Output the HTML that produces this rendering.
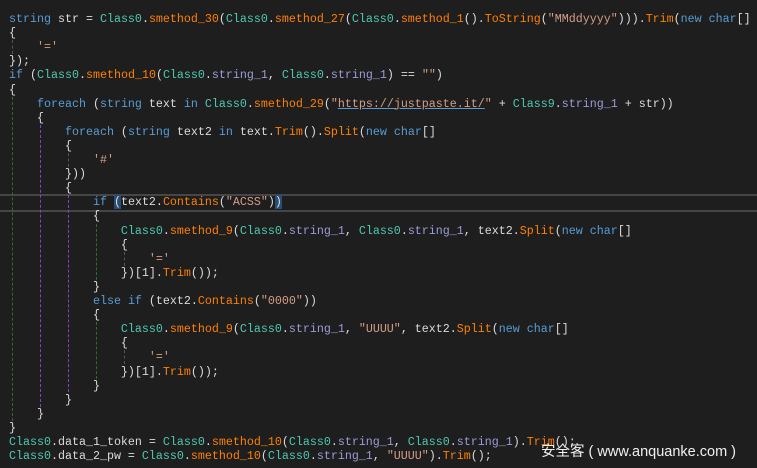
<!DOCTYPE html>
<html><head><meta charset="utf-8"><style>
html,body{margin:0;padding:0;background:#1e1e1e;width:757px;height:468px;overflow:hidden}
#c{position:absolute;left:0;top:0;width:757px;height:468px}
.l{position:absolute;left:9px;height:14.1px;line-height:14.1px;white-space:pre;font-family:"Liberation Mono",monospace;font-size:11.67px;color:#dcdcdc}
.k{color:#569cd6}.t{color:#4ec9b0}.m{color:#ff8000}.f{color:#9b9bd8}.s{color:#d69d85}.u{color:#d69d85;text-decoration:underline;text-decoration-color:#569cd6}
.g{position:absolute;width:0;border-left:1px dashed}
.hl{position:absolute;left:0;width:757px;top:193.5px;height:14px;border-top:2px solid #464646;border-bottom:2px solid #464646}
.bb{background:#264f78}
#wm{position:absolute;left:541px;top:440px;font-family:"Liberation Sans","Noto Sans CJK SC",sans-serif;font-size:14.5px;color:#f0f0f0;white-space:pre}
</style></head><body><div id="c">
<div class="hl"></div>
<div class="g" style="left:12px;top:40.2px;height:14.1px;border-color:#555"></div>
<div class="g" style="left:12px;top:96.6px;height:324px;border-color:#2e6b30"></div>
<div class="g" style="left:40px;top:124.8px;height:282px;border-color:#8a3fc9"></div>
<div class="g" style="left:68px;top:195.3px;height:197px;border-color:#8a3fc9"></div>
<div class="g" style="left:68px;top:153px;height:14.1px;border-color:#555"></div>
<div class="g" style="left:96px;top:223.5px;height:56.4px;border-color:#2e6b30"></div>
<div class="g" style="left:96px;top:322.2px;height:56.4px;border-color:#2e6b30"></div>
<div class="g" style="left:124px;top:251.7px;height:14.1px;border-color:#555"></div>
<div class="g" style="left:124px;top:350.4px;height:14.1px;border-color:#555"></div>

<div class="l" style="top:12px"><span class="k">string</span> str = <span class="t">Class0</span>.<span class="m">smethod_30</span>(<span class="t">Class0</span>.<span class="m">smethod_27</span>(<span class="t">Class0</span>.<span class="m">smethod_1</span>().<span class="m">ToString</span>(<span class="s">"MMddyyyy"</span>))).<span class="m">Trim</span>(<span class="k">new</span> <span class="k">char</span>[]</div>
<div class="l" style="top:26.1px">{</div>
<div class="l" style="top:40.2px">    <span class="s">'='</span></div>
<div class="l" style="top:54.3px">});</div>
<div class="l" style="top:68.4px"><span class="k">if</span> (<span class="t">Class0</span>.<span class="m">smethod_10</span>(<span class="t">Class0</span>.<span class="f">string_1</span>, <span class="t">Class0</span>.<span class="f">string_1</span>) == <span class="s">""</span>)</div>
<div class="l" style="top:82.5px">{</div>
<div class="l" style="top:96.6px">    <span class="k">foreach</span> (<span class="k">string</span> text <span class="k">in</span> <span class="t">Class0</span>.<span class="m">smethod_29</span>(<span class="s">"</span><span class="u">https://justpaste.it/</span><span class="s">"</span> + <span class="t">Class9</span>.<span class="f">string_1</span> + str))</div>
<div class="l" style="top:110.7px">    {</div>
<div class="l" style="top:124.8px">        <span class="k">foreach</span> (<span class="k">string</span> text2 <span class="k">in</span> text.<span class="m">Trim</span>().<span class="m">Split</span>(<span class="k">new</span> <span class="k">char</span>[]</div>
<div class="l" style="top:138.9px">        {</div>
<div class="l" style="top:153px">            <span class="s">'#'</span></div>
<div class="l" style="top:167.1px">        }))</div>
<div class="l" style="top:181.2px">        {</div>
<div class="l" style="top:195.3px">            <span class="k">if</span> <span class="bb">(</span>text2.<span class="m">Contains</span>(<span class="s">"ACSS"</span>)<span class="bb">)</span></div>
<div class="l" style="top:209.4px">            {</div>
<div class="l" style="top:223.5px">                <span class="t">Class0</span>.<span class="m">smethod_9</span>(<span class="t">Class0</span>.<span class="f">string_1</span>, <span class="t">Class0</span>.<span class="f">string_1</span>, text2.<span class="m">Split</span>(<span class="k">new</span> <span class="k">char</span>[]</div>
<div class="l" style="top:237.6px">                {</div>
<div class="l" style="top:251.7px">                    <span class="s">'='</span></div>
<div class="l" style="top:265.8px">                })[1].<span class="m">Trim</span>());</div>
<div class="l" style="top:279.9px">            }</div>
<div class="l" style="top:294px">            <span class="k">else</span> <span class="k">if</span> (text2.<span class="m">Contains</span>(<span class="s">"0000"</span>))</div>
<div class="l" style="top:308.1px">            {</div>
<div class="l" style="top:322.2px">                <span class="t">Class0</span>.<span class="m">smethod_9</span>(<span class="t">Class0</span>.<span class="f">string_1</span>, <span class="s">"UUUU"</span>, text2.<span class="m">Split</span>(<span class="k">new</span> <span class="k">char</span>[]</div>
<div class="l" style="top:336.3px">                {</div>
<div class="l" style="top:350.4px">                    <span class="s">'='</span></div>
<div class="l" style="top:364.5px">                })[1].<span class="m">Trim</span>());</div>
<div class="l" style="top:378.6px">            }</div>
<div class="l" style="top:392.7px">        }</div>
<div class="l" style="top:406.8px">    }</div>
<div class="l" style="top:420.9px">}</div>
<div class="l" style="top:435px"><span class="t">Class0</span>.data_1_token = <span class="t">Class0</span>.<span class="m">smethod_10</span>(<span class="t">Class0</span>.<span class="f">string_1</span>, <span class="t">Class0</span>.<span class="f">string_1</span>).<span class="m">Trim</span>();</div>
<div class="l" style="top:449.1px"><span class="t">Class0</span>.data_2_pw = <span class="t">Class0</span>.<span class="m">smethod_10</span>(<span class="t">Class0</span>.<span class="f">string_1</span>, <span class="s">"UUUU"</span>).<span class="m">Trim</span>();</div>
<div id="wm">安全客 ( www.anquanke.com )</div>
</div></body></html>
